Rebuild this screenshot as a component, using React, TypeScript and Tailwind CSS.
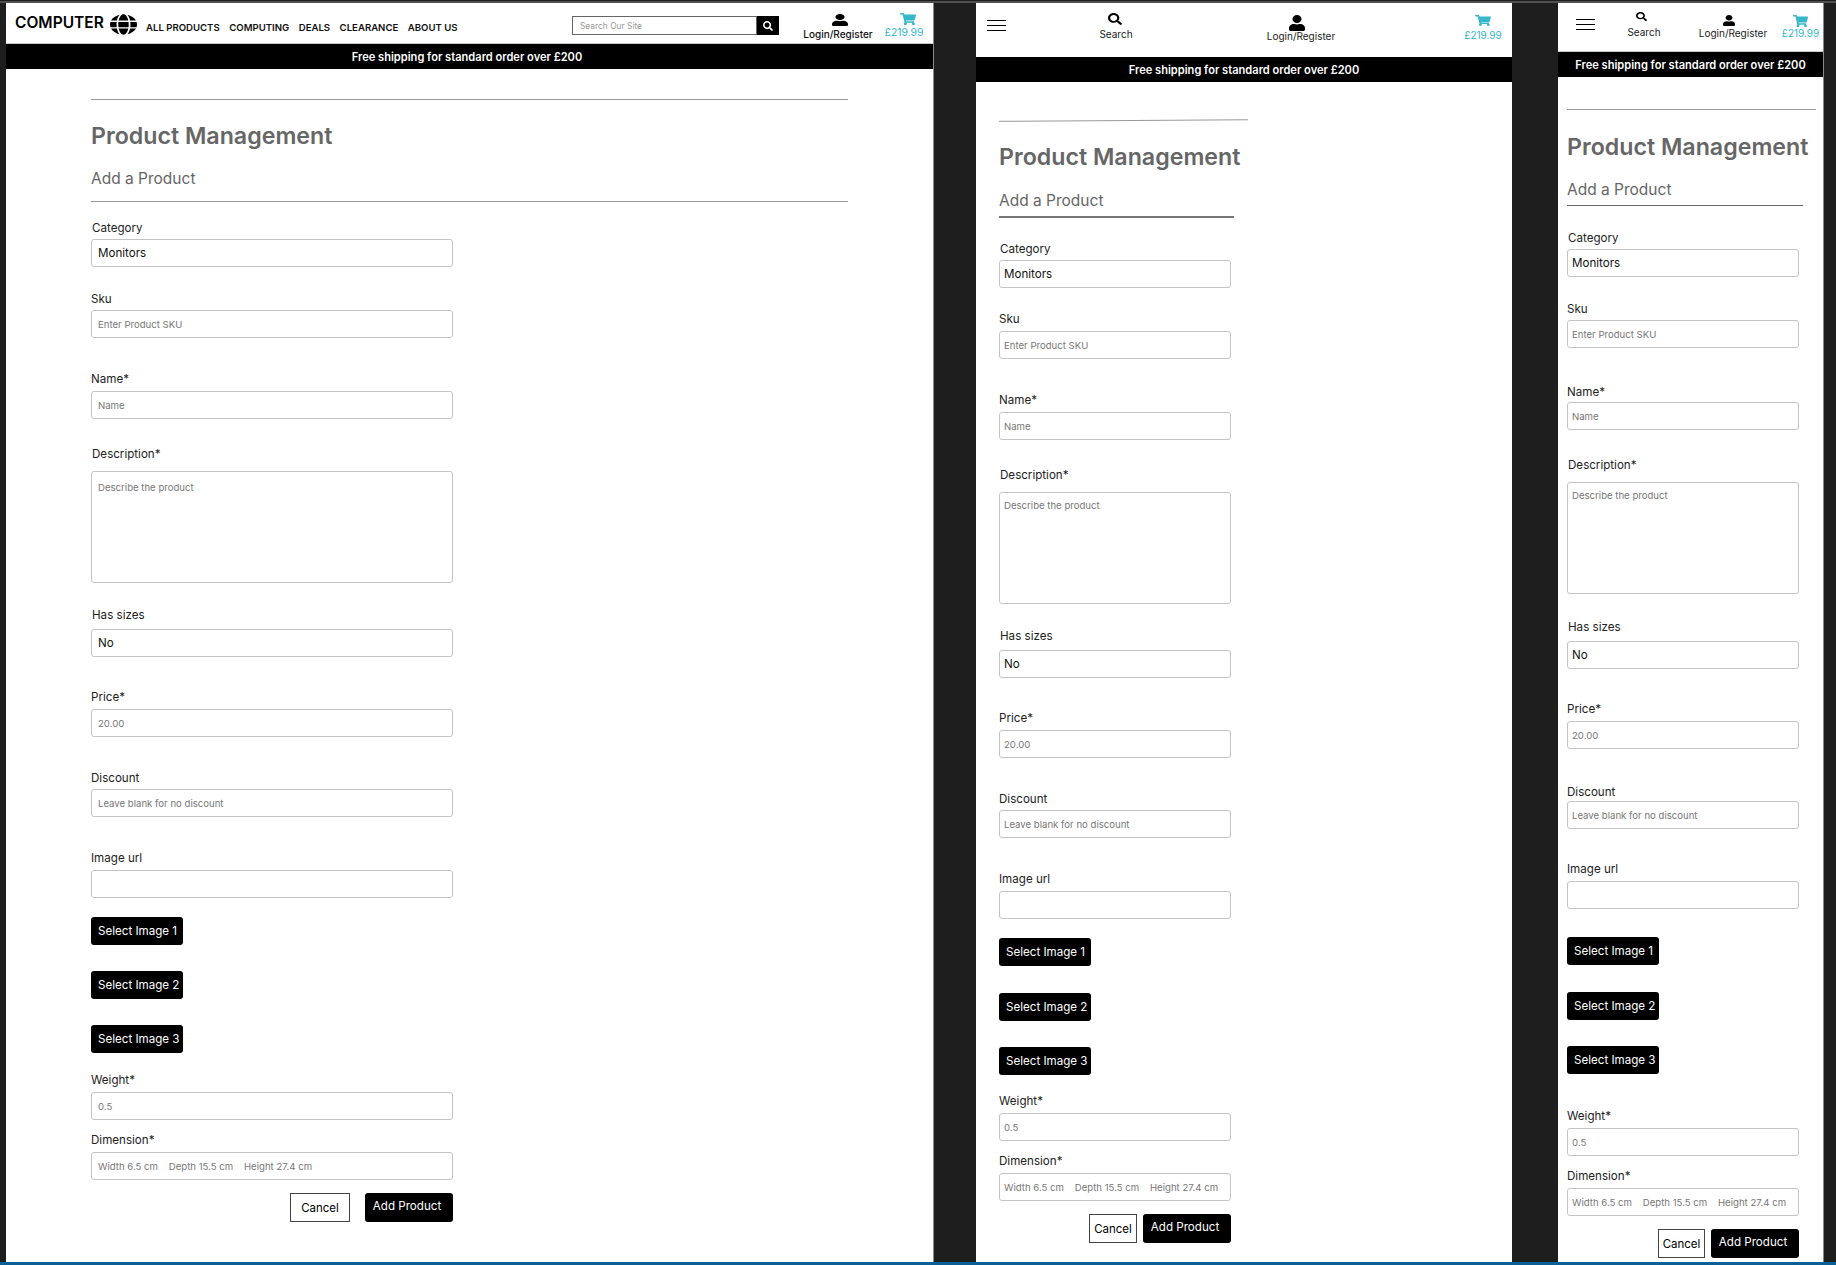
import React from 'react';
import { FaGlobe, FaSearch, FaShoppingCart, FaUser } from 'react-icons/fa';

type Spacing = {
  pad: string; areaPad: string; skuGap: string; nameGap: string; discountGap: string;
  sku: string; name: string; desc: string; sizes: string; price: string; discount: string; image: string;
  btn1: string; btn2: string; btn3: string; weight: string; dim: string; actions: string; cancel: string;
};

const Field: React.FC<{ label: string; className?: string; gap: string; pad: string; value?: string; placeholder?: string }> = ({
  label, className = '', gap, pad, value, placeholder,
}) => (
  <div className={className}>
    <label className={`block h-4 text-[11.6px] leading-4 text-[#222] ${gap}`}>{label}</label>
    <input
      className={`block h-[28px] w-full rounded-[3px] border border-[#c4c4c4] bg-white text-[11.6px] text-[#111] outline-none placeholder:text-[9.6px] placeholder:text-[#777] ${pad}`}
      defaultValue={value}
      placeholder={placeholder}
      readOnly
    />
  </div>
);

const SelectButton: React.FC<{ label: string; className: string }> = ({ label, className }) => (
  <button className={`block h-[28px] w-[92px] rounded-[3px] bg-black pl-[7px] pt-px text-left text-[11.6px] text-white whitespace-nowrap ${className}`}>
    {label}
  </button>
);

const ProductForm: React.FC<{ width: string; s: Spacing }> = ({ width, s }) => (
  <form className={width}>
    <Field label="Category" gap="mb-[3px] pl-px" pad={s.pad} value="Monitors" />
    <Field label="Sku" className={s.sku} gap={s.skuGap} pad={s.pad} placeholder="Enter Product SKU" />
    <Field label="Name*" className={s.name} gap={s.nameGap} pad={s.pad} placeholder="Name" />
    <div className={s.desc}>
      <label className="mb-[9px] block h-4 pl-px text-[11.6px] leading-4 text-[#222]">Description*</label>
      <textarea
        className={`block h-[112px] w-full resize-none rounded-[3px] border border-[#c4c4c4] text-[9.6px] outline-none placeholder:text-[#777] ${s.areaPad}`}
        placeholder="Describe the product"
        readOnly
      />
    </div>
    <Field label="Has sizes" className={s.sizes} gap="mb-[6px] pl-px" pad={s.pad} value="No" />
    <Field label="Price*" className={s.price} gap="mb-[4px]" pad={s.pad} placeholder="20.00" />
    <Field label="Discount" className={s.discount} gap={s.discountGap} pad={s.pad} placeholder="Leave blank for no discount" />
    <Field label="Image url" className={s.image} gap="mb-[4px]" pad={s.pad} />
    <SelectButton label="Select Image 1" className={s.btn1} />
    <SelectButton label="Select Image 2" className={s.btn2} />
    <SelectButton label="Select Image 3" className={s.btn3} />
    <Field label="Weight*" className={s.weight} gap="mb-[4px]" pad={s.pad} placeholder="0.5" />
    <Field label="Dimension*" className={s.dim} gap="mb-[4px]" pad={s.pad} placeholder="Width 6.5 cm    Depth 15.5 cm    Height 27.4 cm" />
    <div className={`flex justify-end ${s.actions}`}>
      <button className={`h-[29px] border border-[#444] bg-white pt-[2px] text-[11.5px] text-black ${s.cancel}`}>Cancel</button>
      <button className="h-[29px] w-[88px] rounded-[3px] bg-black pb-px pr-[4px] text-[11.6px] text-white">Add Product</button>
    </div>
  </form>
);

const ShippingBar: React.FC<{ className?: string }> = ({ className = '' }) => (
  <div className={`flex h-[25px] items-center justify-center bg-black pt-px text-[11.1px] font-semibold text-white ${className}`}>
    Free shipping for standard order over £200
  </div>
);

const Hamburger: React.FC = () => (
  <div className="flex w-[19px] flex-col gap-[4px]">
    <span className="h-px bg-black" />
    <span className="h-px bg-black" />
    <span className="h-px bg-black" />
  </div>
);

const DesktopHeader: React.FC = () => (
  <header className="flex h-[41px] items-start border-b border-[#ccc] bg-white">
    <span className="ml-[9px] mt-[10px] w-[89px] text-[15.5px] font-semibold leading-5 text-black">COMPUTER</span>
    <FaGlobe className="ml-[6px] mt-[11px] h-[21px] w-[27px] text-black" preserveAspectRatio="none" />
    <nav className="ml-[9px] mt-[18px] flex w-[313px] gap-[9.5px] whitespace-nowrap text-[9.6px] font-semibold leading-[14px] text-[#111]">
      <span>ALL PRODUCTS</span>
      <span>COMPUTING</span>
      <span>DEALS</span>
      <span>CLEARANCE</span>
      <span>ABOUT US</span>
    </nav>
    <div className="ml-[113px] mt-[13px] flex h-[19px]">
      <div className="flex w-[185px] items-center border border-[#666] pl-[7px] pt-px text-[8.4px] text-[#999]">Search Our Site</div>
      <div className="flex w-[22px] items-center justify-center bg-black">
        <FaSearch className="h-[10px] w-[10px] text-white" />
      </div>
    </div>
    <div className="ml-[25px] mt-[11px] flex w-[68px] flex-col items-center">
      <FaUser className="h-[12px] w-[16px] translate-x-[2px] text-black" preserveAspectRatio="none" />
      <span className="mt-[1px] text-[10px] font-medium leading-[14px] text-[#111] whitespace-nowrap">Login/Register</span>
    </div>
    <div className="ml-[13px] mt-[10px] flex w-[38px] flex-col items-center">
      <FaShoppingCart className="h-[12px] w-[16px] translate-x-[4px] text-[#35b8c8]" preserveAspectRatio="none" />
      <span className="mt-[1px] text-[10.4px] leading-[14px] text-[#35b8c8]">£219.99</span>
    </div>
  </header>
);

const TabletHeader: React.FC = () => (
  <header className="flex h-[54px] items-start bg-white">
    <div className="ml-[11px] mt-[17px]"><Hamburger /></div>
    <div className="ml-[94px] mt-[10px] flex w-[32px] flex-col items-center">
      <FaSearch className="h-[12px] w-[14px] -translate-x-px text-black" preserveAspectRatio="none" />
      <span className="mt-[2px] text-[10px] leading-[14px] text-[#222]">Search</span>
    </div>
    <div className="ml-[136px] mt-[12px] flex w-[66px] flex-col items-center">
      <FaUser className="h-[16px] w-[16px] -translate-x-[4px] text-black" preserveAspectRatio="none" />
      <span className="text-[10px] leading-[10px] text-[#222] whitespace-nowrap">Login/Register</span>
    </div>
    <div className="ml-[131px] mt-[12px] flex w-[36px] flex-col items-center">
      <FaShoppingCart className="h-[11px] w-[16px] text-[#35b8c8]" preserveAspectRatio="none" />
      <span className="mt-[2px] text-[10px] leading-[14px] text-[#35b8c8]">£219.99</span>
    </div>
  </header>
);

const PhoneHeader: React.FC = () => (
  <header className="flex h-[49px] items-start border-b border-[#ccc] bg-white">
    <div className="ml-[18px] mt-[16px]"><Hamburger /></div>
    <div className="ml-[33px] mt-[9px] flex w-[32px] flex-col items-center">
      <FaSearch className="h-[9px] w-[11px] -translate-x-[3px] text-black" preserveAspectRatio="none" />
      <span className="mt-[6px] text-[10px] leading-[10px] text-[#222]">Search</span>
    </div>
    <div className="ml-[40px] mt-[12px] flex w-[66px] flex-col items-center">
      <FaUser className="h-[11px] w-[12px] -translate-x-[4px] text-black" preserveAspectRatio="none" />
      <span className="mt-[2px] text-[10px] leading-[10px] text-[#222] whitespace-nowrap">Login/Register</span>
    </div>
    <div className="ml-[16px] mt-[12px] flex w-[37px] flex-col items-center">
      <FaShoppingCart className="h-[12px] w-[15px] text-[#35b8c8]" preserveAspectRatio="none" />
      <span className="mt-px text-[10px] leading-[10px] text-[#35b8c8] whitespace-nowrap">£219.99</span>
    </div>
  </header>
);

const desktopSpacing: Spacing = {
  pad: 'px-[6px]', areaPad: 'px-[6px] pt-[9px]', skuGap: 'mb-[3px]', nameGap: 'mb-[4px]', discountGap: 'mb-[3px]',
  sku: 'mt-[24px]', name: 'mt-[33px]', desc: 'mt-[27px]', sizes: 'mt-[24px]', price: 'mt-[32px]', discount: 'mt-[33px]',
  image: 'mt-[33px]', btn1: 'mt-[19px]', btn2: 'mt-[26px]', btn3: 'mt-[26px]', weight: 'mt-[19px]', dim: 'mt-[12px]', actions: 'mt-[13px] gap-[15px]', cancel: 'w-[60px]',
};

const tabletSpacing: Spacing = {
  pad: 'px-[4px]', areaPad: 'px-[4px] pt-[6px]', skuGap: 'mb-[4px]', nameGap: 'mb-[4px]', discountGap: 'mb-[3px]',
  sku: 'mt-[23px]', name: 'mt-[33px]', desc: 'mt-[27px]', sizes: 'mt-[24px]', price: 'mt-[32px]', discount: 'mt-[33px]',
  image: 'mt-[33px]', btn1: 'mt-[19px]', btn2: 'mt-[27px]', btn3: 'mt-[26px]', weight: 'mt-[18px]', dim: 'mt-[12px]', actions: 'mt-[13px] gap-[6px]', cancel: 'w-[48px]',
};

const phoneSpacing: Spacing = {
  pad: 'px-[4px]', areaPad: 'px-[4px] pt-[6px]', skuGap: 'mb-[3px]', nameGap: 'mb-[2px]', discountGap: 'mb-px',
  sku: 'mt-[24px]', name: 'mt-[36px]', desc: 'mt-[27px]', sizes: 'mt-[25px]', price: 'mt-[32px]', discount: 'mt-[35px]',
  image: 'mt-[32px]', btn1: 'mt-[28px]', btn2: 'mt-[27px]', btn3: 'mt-[26px]', weight: 'mt-[34px]', dim: 'mt-[12px]', actions: 'mt-[13px] gap-[6px]', cancel: 'w-[47px]',
};

export default function App() {
  return (
    <div className="flex h-[1265px] w-[1836px] flex-col overflow-hidden bg-[#1e1e1e] font-['Inter',sans-serif]">
      <div className="h-[3px] border-t border-[#1e1e1e] bg-[#505050]" />
      <div className="flex h-[1259px] items-stretch pl-[6px]">
        {/* Desktop */}
        <section className="w-[928px] border-r border-[#888] bg-white">
          <DesktopHeader />
          <ShippingBar className="pr-[5px]" />
          <div className="pl-[85px] pr-[85px] pt-[30px]">
            <div className="h-px bg-[#999]" />
            <h1 className="mt-[21px] text-[23.2px] font-semibold leading-[30px] text-[#666]">Product Management</h1>
            <h2 className="mt-[18px] text-[15.5px] leading-[20px] text-[#666]">Add a Product</h2>
            <div className="mt-[12px] h-px bg-[#999]" />
            <div className="mt-[18px]">
              <ProductForm width="w-[362px]" s={desktopSpacing} />
            </div>
          </div>
        </section>

        {/* Tablet */}
        <section className="ml-[42px] w-[536px] bg-white">
          <TabletHeader />
          <ShippingBar />
          <div className="pl-[23px] pt-[38px]">
            <div className="h-px w-[249px] -rotate-[0.4deg] bg-[#999]" />
            <h1 className="mt-[21px] text-[23.2px] font-semibold leading-[30px] text-[#666]">Product Management</h1>
            <h2 className="mt-[19px] text-[15.5px] leading-[20px] text-[#666]">Add a Product</h2>
            <div className="mt-[5px] h-[2px] w-[235px] bg-[#777]" />
            <div className="mt-[23px]">
              <ProductForm width="w-[232px]" s={tabletSpacing} />
            </div>
          </div>
        </section>

        {/* Mobile */}
        <section className="ml-[46px] w-[266px] border-r border-[#888] bg-white">
          <PhoneHeader />
          <ShippingBar />
          <div className="pl-[9px] pt-[32px]">
            <div className="h-px w-[249px] bg-[#999]" />
            <h1 className="mt-[22px] text-[23.2px] font-semibold leading-[30px] text-[#666]">Product Management</h1>
            <h2 className="mt-[18px] text-[15.5px] leading-[20px] text-[#666]">Add a Product</h2>
            <div className="mt-[5px] h-px w-[236px] bg-[#666]" />
            <div className="mt-[24px]">
              <ProductForm width="w-[232px]" s={phoneSpacing} />
            </div>
          </div>
        </section>
      </div>
      <div className="h-[3px] bg-[#0b5f98]" />
    </div>
  );
}
